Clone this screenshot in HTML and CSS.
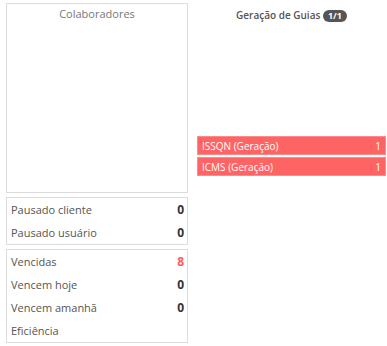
FILE: index.html
```html
<!DOCTYPE html>
<html>
  <head>
    <link rel="stylesheet" href="styles.css">
  </head>
  <body>
    <div class="dashboard">
      <div class="left-col">
        <div class="panel team-panel">
          <div class="panel-title">Colaboradores</div>
        </div>
        <div class="panel stats">
          <div class="stat-row"><span>Pausado cliente</span><b>0</b></div>
          <div class="stat-row"><span>Pausado usuário</span><b>0</b></div>
        </div>
        <div class="panel stats">
          <div class="stat-row"><span>Vencidas</span><b class="danger">8</b></div>
          <div class="stat-row"><span>Vencem hoje</span><b>0</b></div>
          <div class="stat-row"><span>Vencem amanhã</span><b>0</b></div>
          <div class="stat-row"><span>Eficiência</span><b></b></div>
        </div>
      </div>
      <div class="right-col">
        <div class="guides-title">
          Geração de Guias <span class="badge">1/1</span>
        </div>
        <div class="guide-list">
          <div class="guide-item"><span>ISSQN (Geração)</span><span>1</span></div>
          <div class="guide-item"><span>ICMS (Geração)</span><span>1</span></div>
        </div>
      </div>
    </div>
  </body>
</html>
```

FILE: styles.css
```css
* {
  font-family: "Open Sans", sans-serif;
  padding: 0;
  margin: 0;
  box-sizing: border-box;
}

body {
  background: white;
  color: #555;
  font-size: 11px;
}

.dashboard {
  display: flex;
  gap: 9px;
  padding: 3px 1px 0 6px;
}

.left-col {
  width: 182px;
  display: flex;
  flex-direction: column;
  gap: 4px;
}

.panel {
  border: solid 1px #dcdcdc;
  background: white;
}

.team-panel {
  height: 190px;
}

.panel-title {
  text-align: center;
  padding-top: 2px;
  color: #777;
}

.stats {
  padding: 0 3px 0 4px;
}

.stat-row {
  display: flex;
  justify-content: space-between;
  align-items: center;
  height: 23px;
}

.stat-row b {
  color: #333;
  font-weight: 700;
  font-size: 12px;
}

.stat-row b.danger {
  color: #ff5b5b;
}

.right-col {
  flex: 1;
}

.guides-title {
  text-align: center;
  font-weight: 600;
  color: #555;
  font-size: 10px;
  padding-top: 5px;
}

.badge {
  display: inline-block;
  background: #555;
  color: white;
  font-size: 9px;
  font-weight: 700;
  border-radius: 6px;
  padding: 0 5px;
  line-height: 12px;
}

.guide-list {
  margin-top: 114px;
  display: flex;
  flex-direction: column;
  gap: 2px;
}

.guide-item {
  display: flex;
  justify-content: space-between;
  align-items: center;
  height: 19px;
  background: #ff6464;
  border: solid 1px #ff8a8a;
  color: white;
  font-size: 10px;
  padding: 0 4px;
}
```
